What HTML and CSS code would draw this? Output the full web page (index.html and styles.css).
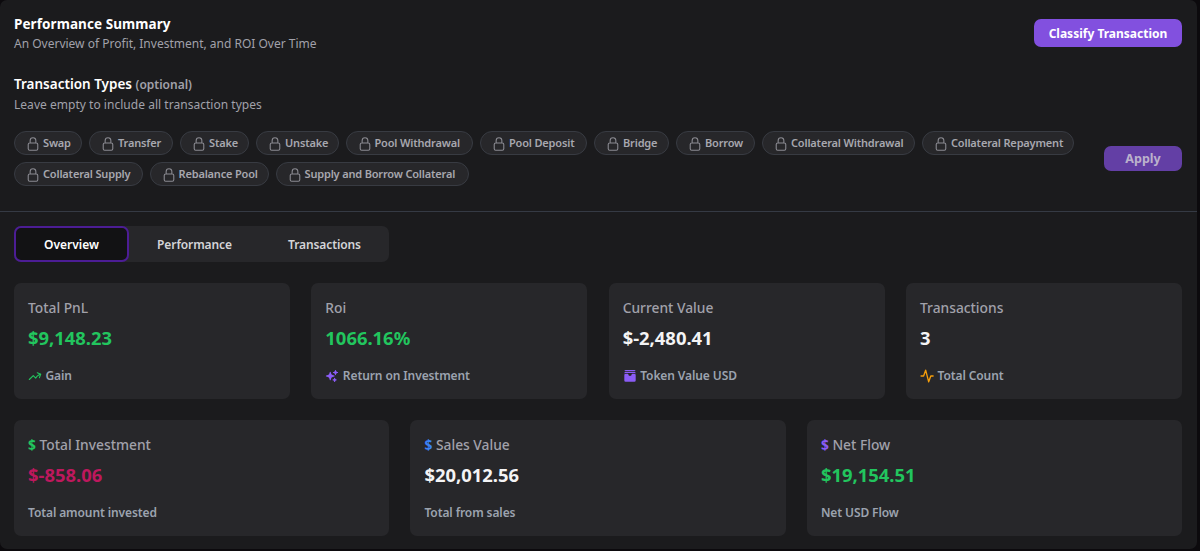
FILE: index.html
```html
<!DOCTYPE html>
<html lang="en">
<head>
<meta charset="utf-8">
<title>Performance Summary</title>
<link rel="stylesheet" href="styles.css">
</head>
<body>
<svg class="sprite" width="0" height="0">
  <symbol id="lock" viewBox="3 1 18 22"><path fill="none" stroke="currentColor" stroke-width="1.7" stroke-linecap="round" stroke-linejoin="round" d="M16.5 10.5V6.75a4.5 4.5 0 1 0-9 0v3.75m-.75 11.25h10.5a2.25 2.25 0 0 0 2.25-2.25v-6.75a2.25 2.25 0 0 0-2.25-2.25H6.75a2.25 2.25 0 0 0-2.25 2.25v6.75a2.25 2.25 0 0 0 2.25 2.25Z"/></symbol>
</svg>
<main class="panel">
  <header class="header">
    <div>
      <h1 class="title strong">Performance Summary</h1>
      <p class="subtitle">An Overview of Profit, Investment, and ROI Over Time</p>
    </div>
    <button class="btn btn-classify">Classify Transaction</button>
  </header>
  <section class="filters">
    <h2 class="title">Transaction Types <span class="optional">(optional)</span></h2>
    <p class="subtitle types-hint">Leave empty to include all transaction types</p>
    <div class="filter-row">
      <div class="chips">
        <span class="chip w68"><svg><use href="#lock"/></svg>Swap</span>
        <span class="chip w84"><svg><use href="#lock"/></svg>Transfer</span>
        <span class="chip w69"><svg><use href="#lock"/></svg>Stake</span>
        <span class="chip w83"><svg><use href="#lock"/></svg>Unstake</span>
        <span class="chip w128"><svg><use href="#lock"/></svg>Pool Withdrawal</span>
        <span class="chip w107"><svg><use href="#lock"/></svg>Pool Deposit</span>
        <span class="chip w75"><svg><use href="#lock"/></svg>Bridge</span>
        <span class="chip w79"><svg><use href="#lock"/></svg>Borrow</span>
        <span class="chip w153"><svg><use href="#lock"/></svg>Collateral Withdrawal</span>
        <span class="chip w152"><svg><use href="#lock"/></svg>Collateral Repayment</span>
        <span class="chip w129"><svg><use href="#lock"/></svg>Collateral Supply</span>
        <span class="chip w119"><svg><use href="#lock"/></svg>Rebalance Pool</span>
        <span class="chip w193"><svg><use href="#lock"/></svg>Supply and Borrow Collateral</span>
      </div>
      <button class="btn btn-apply">Apply</button>
    </div>
  </section>
  <section class="content">
    <nav class="tabs">
      <button class="tab active">Overview</button>
      <button class="tab performance">Performance</button>
      <button class="tab transactions">Transactions</button>
    </nav>
    <div class="cards four">
      <article class="card">
        <h3 class="label">Total PnL</h3>
        <p class="value green">$9,148.23</p>
        <p class="note"><svg class="icon green" viewBox="0 0 24 24" fill="none" stroke="currentColor" stroke-width="1.9" stroke-linecap="round" stroke-linejoin="round"><path d="M2.25 18 9 11.25l4.306 4.306a11.95 11.95 0 0 1 5.814-5.518l2.74-1.22m0 0-5.94-2.281m5.94 2.28-2.28 5.941"/></svg>Gain</p>
      </article>
      <article class="card">
        <h3 class="label">Roi</h3>
        <p class="value green">1066.16%</p>
        <p class="note"><svg class="icon purple" viewBox="0 0 24 24" fill="currentColor"><path d="M9 4.5a.75.75 0 0 1 .721.544l.813 2.846a3.75 3.75 0 0 0 2.576 2.576l2.846.813a.75.75 0 0 1 0 1.442l-2.846.813a3.75 3.75 0 0 0-2.576 2.576l-.813 2.846a.75.75 0 0 1-1.442 0l-.813-2.846a3.75 3.75 0 0 0-2.576-2.576l-2.846-.813a.75.75 0 0 1 0-1.442l2.846-.813A3.75 3.75 0 0 0 7.466 7.89l.813-2.846A.75.75 0 0 1 9 4.5ZM18 1.5a.75.75 0 0 1 .728.568l.258 1.036c.236.94.97 1.674 1.91 1.91l1.036.258a.75.75 0 0 1 0 1.456l-1.036.258c-.94.236-1.674.97-1.91 1.91l-.258 1.036a.75.75 0 0 1-1.456 0l-.258-1.036a2.625 2.625 0 0 0-1.91-1.91l-1.036-.258a.75.75 0 0 1 0-1.456l1.036-.258a2.625 2.625 0 0 0 1.91-1.91l.258-1.036A.75.75 0 0 1 18 1.5ZM16.5 15a.75.75 0 0 1 .712.513l.394 1.183c.15.447.5.799.948.948l1.183.395a.75.75 0 0 1 0 1.422l-1.183.395c-.447.15-.799.5-.948.948l-.395 1.183a.75.75 0 0 1-1.422 0l-.395-1.183a1.5 1.5 0 0 0-.948-.948l-1.183-.395a.75.75 0 0 1 0-1.422l1.183-.395c.447-.15.799-.5.948-.948l.395-1.183A.75.75 0 0 1 16.5 15Z"/></svg>Return on Investment</p>
      </article>
      <article class="card">
        <h3 class="label">Current Value</h3>
        <p class="value">$-2,480.41</p>
        <p class="note"><svg class="icon purple" viewBox="0 0 24 24" fill="currentColor"><path d="M2.27 3.4C2.7 2.2 3.6 1.7 4.8 1.7h14.4c1.2 0 2.1.6 2.5 1.7ZM2.25 7.5c0-1.6 1-2.6 2.6-2.6h14.3c1.6 0 2.6 1 2.6 2.6-.8-.5-1.7-.8-2.6-.8H4.85c-.9 0-1.8.3-2.6.8ZM4.5 8.2h3.8c.5 0 .8.4.8.9a2.9 2.9 0 0 0 5.8 0c0-.5.3-.9.8-.9h3.8a2.3 2.3 0 0 1 2.25 2.3v9a2.3 2.3 0 0 1-2.25 2.3h-15a2.3 2.3 0 0 1-2.25-2.3v-9A2.3 2.3 0 0 1 4.5 8.2Z"/></svg>Token Value USD</p>
      </article>
      <article class="card">
        <h3 class="label">Transactions</h3>
        <p class="value">3</p>
        <p class="note"><svg class="icon orange" viewBox="0 0 24 24" fill="none" stroke="currentColor" stroke-width="2.3" stroke-linecap="round" stroke-linejoin="round"><path d="M1.8 12h4.4L9.7 2l5.2 20 3.6-10h4"/></svg>Total Count</p>
      </article>
    </div>
    <div class="cards three">
      <article class="card">
        <h3 class="label"><b class="green">$</b> Total Investment</h3>
        <p class="value pink">$-858.06</p>
        <p class="note">Total amount invested</p>
      </article>
      <article class="card">
        <h3 class="label"><b class="blue">$</b> Sales Value</h3>
        <p class="value">$20,012.56</p>
        <p class="note">Total from sales</p>
      </article>
      <article class="card">
        <h3 class="label"><b class="purple">$</b> Net Flow</h3>
        <p class="value green">$19,154.51</p>
        <p class="note">Net USD Flow</p>
      </article>
    </div>
  </section>
</main>
</body>
</html>
```

FILE: styles.css
```css
* { box-sizing: border-box; }
body {
  margin: 0;
  height: 551px;
  overflow: hidden;
  background: #0c0a0d;
  color: #fff;
  font-family: "Noto Sans", "Open Sans", sans-serif;
}
h1, h2, h3, p { margin: 0; }
button { font-family: inherit; color: inherit; border: 0; padding: 0; }
.sprite { display: block; position: absolute; }
.panel {
  width: 1197px;
  height: 549px;
  background: #1b1b1d;
  border-radius: 7px;
}
.header {
  display: flex;
  justify-content: space-between;
  align-items: flex-start;
  height: 74px;
  padding: 14px 15px 0 14px;
}
.title { font-size: 13.5px; font-weight: 600; line-height: 20px; white-space: nowrap; }
.title.strong { font-weight: 700; letter-spacing: 0.08px; }
.subtitle { font-size: 12px; line-height: 20px; color: #a1a1aa; white-space: nowrap; }
.types-hint { letter-spacing: 0.03px; }
.optional { font-size: 12px; color: #a1a1aa; }
.btn { border-radius: 7px; font-weight: 700; white-space: nowrap; }
.btn-classify { width: 148px; height: 28px; margin-top: 5px; background: #8250df; font-size: 12px; }
.btn-apply { flex: none; width: 78px; height: 25px; background: #633fa5; color: #bbb1cc; font-size: 12.5px; }
.filters { height: 138px; padding: 0 15px 0 14px; border-bottom: 1px solid #353a44; }
.filter-row { display: flex; justify-content: space-between; align-items: center; margin-top: 16px; }
.chips { display: flex; flex-wrap: wrap; gap: 7px; width: 1075px; }
.chip {
  display: flex;
  align-items: center;
  gap: 4px;
  height: 24px;
  padding: 0 0 2px 12px;
  border: 1px solid #383b42;
  border-radius: 12px;
  background: #27272a;
  color: #a7a7af;
  font-size: 11px;
  font-weight: 600;
  letter-spacing: -0.17px;
  white-space: nowrap;
}
.chip svg { flex: none; width: 12px; height: 14px; margin-top: 3px; color: #8b8b92; }
.w68 { width: 68px; } .w69 { width: 69px; } .w75 { width: 75px; } .w79 { width: 79px; }
.w83 { width: 82.5px; } .w84 { width: 84px; } .w107 { width: 107px; } .w119 { width: 119px; }
.w128 { width: 127.5px; } .w129 { width: 128.5px; } .w152 { width: 152px; } .w153 { width: 153px; }
.w193 { width: 193px; }
.content { padding: 14px 15px 0 14px; }
.tabs { display: flex; width: 375px; height: 36px; border-radius: 7px; background: #27272a; }
.tab { background: none; font-size: 12px; font-weight: 600; color: #d4d4d8; }
.tab.active { width: 115px; border: 2px solid #4c1d95; border-radius: 7px; background: #121214; color: #fff; }
.tab.performance { width: 131px; letter-spacing: -0.1px; }
.tab.transactions { width: 129px; letter-spacing: -0.1px; }
.cards { display: grid; column-gap: 21.4px; margin-top: 21px; }
.four { grid-template-columns: repeat(4, 1fr); }
.three { grid-template-columns: repeat(3, 1fr); }
.card { height: 116px; padding: 14px; border-radius: 7px; background: #27272a; white-space: nowrap; }
.label { font-size: 13.8px; line-height: 21px; font-weight: 500; color: #a1a1aa; }
.value { margin-top: 6px; font-size: 18.4px; line-height: 28px; font-weight: 700; color: #f4f4f5; }
.note { display: flex; align-items: center; gap: 3.5px; margin-top: 14px; font-size: 12px; line-height: 20px; font-weight: 600; letter-spacing: -0.1px; color: #9ca3af; }
.icon { flex: none; width: 14px; height: 14px; }
.green { color: #22c55e; }
.purple { color: #8b5cf6; }
.blue { color: #3b82f6; }
.orange { color: #f59e0b; }
.pink { color: #be185d; }
```
